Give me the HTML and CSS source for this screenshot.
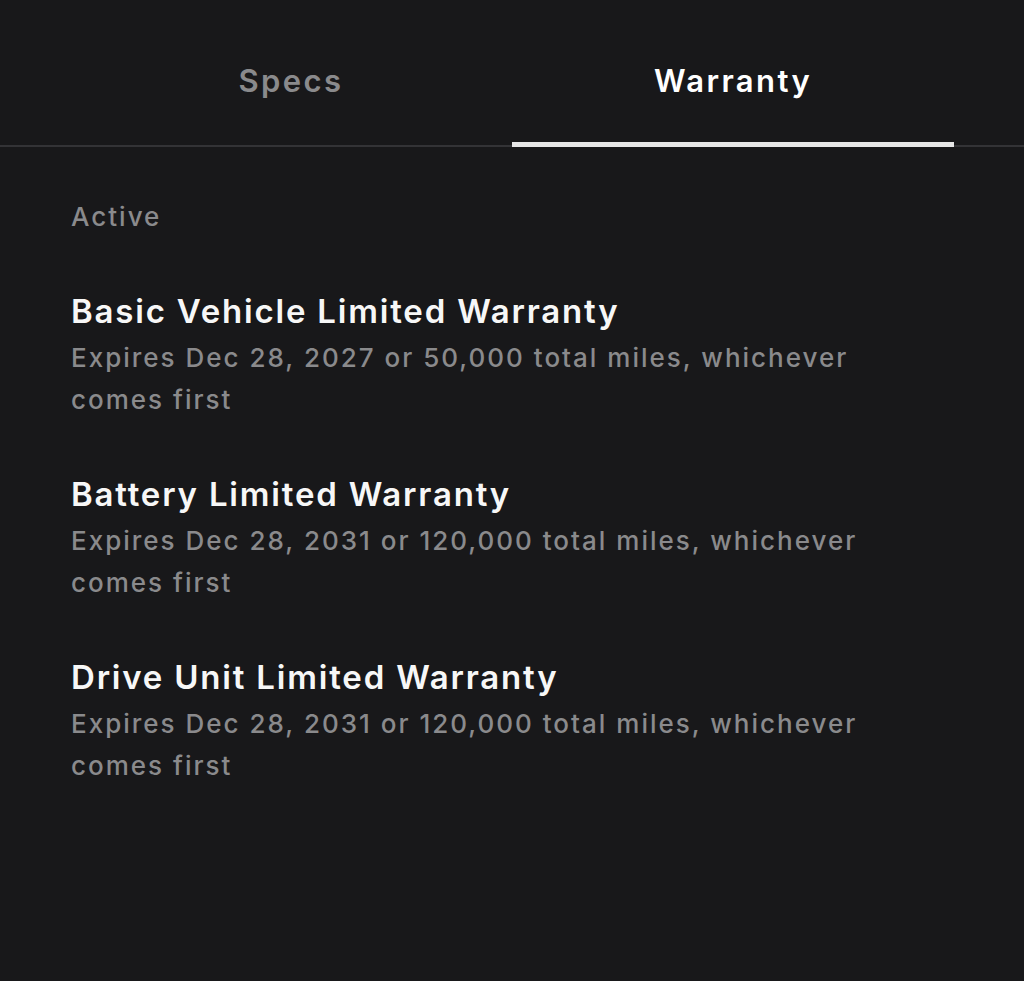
FILE: index.html
```html
<!DOCTYPE html>
<html lang="en">
<head>
    <meta charset="UTF-8">
    <meta name="viewport" content="width=device-width, initial-scale=1.0">
    <title>Warranty</title>
    <link rel="stylesheet" href="styles.css">
</head>
<body>
    <div class="tabs">
        <button class="tab">Specs</button>
        <button class="tab active">Warranty</button>
    </div>

    <div class="content">
        <div class="section-label">Active</div>

        <div class="item">
            <div class="item-title">Basic Vehicle Limited Warranty</div>
            <div class="item-desc">Expires Dec 28, 2027 or 50,000 total miles, whichever comes first</div>
        </div>

        <div class="item">
            <div class="item-title">Battery Limited Warranty</div>
            <div class="item-desc">Expires Dec 28, 2031 or 120,000 total miles, whichever comes first</div>
        </div>

        <div class="item">
            <div class="item-title">Drive Unit Limited Warranty</div>
            <div class="item-desc">Expires Dec 28, 2031 or 120,000 total miles, whichever comes first</div>
        </div>
    </div>
</body>
</html>
```

FILE: styles.css
```css
html, body { margin: 0; padding: 0; background: #18181a; }
body { font-family: Inter, "Noto Sans", sans-serif; color: #f7f7f7; height: 981px; }

.tabs { display: flex; padding: 0 70px; border-bottom: 2px solid #333336; }
.tab { flex: 1; height: 147px; padding: 18px 0 0; background: none; border: none; border-bottom: 5px solid transparent; margin-bottom: -2px; font-family: inherit; font-size: 31px; font-weight: 600; letter-spacing: 2.4px; color: #8a8a8c; cursor: pointer; }
.tab.active { color: #fff; border-bottom-color: #e6e6e6; }

.content { padding: 54px 71px 0; }
.section-label { font-size: 26px; font-weight: 500; letter-spacing: 2px; color: #8a8a8c; margin-bottom: 59px; }
.item { margin-bottom: 53px; }
.item-title { font-size: 33px; font-weight: 600; letter-spacing: 1.8px; line-height: 40px; margin-bottom: 6px; }
.item-desc { font-size: 26px; font-weight: 500; letter-spacing: 2px; line-height: 42px; color: #8a8a8c; max-width: 810px; }
```
